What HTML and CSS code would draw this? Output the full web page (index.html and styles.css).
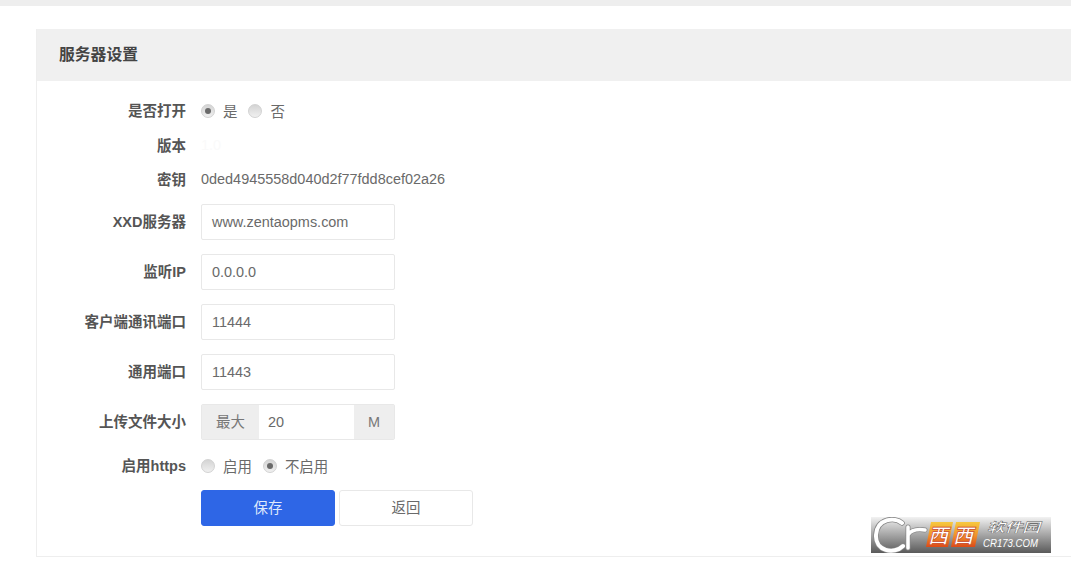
FILE: index.html
```html
<!DOCTYPE html>
<html lang="zh">
<head>
<meta charset="utf-8">
<title>服务器设置</title>
<link rel="stylesheet" href="styles.css">
</head>
<body>
<div class="topbar"></div>
<main class="panel">
  <h1 class="panel-title">服务器设置</h1>
  <form class="form">
    <div class="row">
      <span class="label">是否打开</span>
      <div class="options raised">
        <span class="radio checked"></span><span class="opt">是</span>
        <span class="radio"></span><span class="opt">否</span>
      </div>
    </div>
    <div class="row">
      <span class="label label-plain">版本</span>
      <span class="value ghost">1.0</span>
    </div>
    <div class="row">
      <span class="label label-plain">密钥</span>
      <span class="value">0ded4945558d040d2f77fdd8cef02a26</span>
    </div>
    <div class="row field first">
      <span class="label">XXD服务器</span>
      <div class="input">www.zentaopms.com</div>
    </div>
    <div class="row field">
      <span class="label">监听IP</span>
      <div class="input">0.0.0.0</div>
    </div>
    <div class="row field">
      <span class="label">客户端通讯端口</span>
      <div class="input">11444</div>
    </div>
    <div class="row field">
      <span class="label">通用端口</span>
      <div class="input">11443</div>
    </div>
    <div class="row field">
      <span class="label">上传文件大小</span>
      <div class="group">
        <span class="addon addon-left">最大</span>
        <span class="group-input">20</span>
        <span class="addon addon-right">M</span>
      </div>
    </div>
    <div class="row https">
      <span class="label">启用https</span>
      <div class="options raised">
        <span class="radio"></span><span class="opt">启用</span>
        <span class="radio checked"></span><span class="opt">不启用</span>
      </div>
    </div>
    <div class="row actions">
      <span class="label"></span>
      <div class="buttons">
        <span class="btn primary">保存</span>
        <span class="btn">返回</span>
      </div>
    </div>
  </form>
</main>
<svg class="watermark" width="180" height="36" viewBox="0 0 180 36" aria-label="西西软件园">
  <defs>
    <linearGradient id="bg" x1="0" y1="0" x2="0" y2="1">
      <stop offset="0" stop-color="#f2f2f2"/>
      <stop offset="0.4" stop-color="#b4b4b4"/>
      <stop offset="1" stop-color="#5a5a5a"/>
    </linearGradient>
    <linearGradient id="orange" x1="0" y1="0" x2="0" y2="1">
      <stop offset="0" stop-color="#f7c93f"/>
      <stop offset="0.55" stop-color="#f0902a"/>
      <stop offset="1" stop-color="#dc4a18"/>
    </linearGradient>
  </defs>
  <rect width="180" height="36" fill="url(#bg)"/>
  <path class="wm-edge" d="M31 6C24 0 6 1 5 18c-1 16 18 20 27 11"/>
  <path class="wm-c" d="M31 6C24 0 6 1 5 18c-1 16 18 20 27 11"/>
  <path class="wm-edge thin" d="M37 10v21M37 18c3-5 10-6 17-5"/>
  <path class="wm-c thin" d="M37 10v21M37 18c3-5 10-6 17-5"/>
  <path d="M60 5h22l-5 25H55z" fill="url(#orange)"/>
  <path d="M85 5h24l-5 25H80z" fill="url(#orange)"/>
  <text class="wm-xi" x="57" y="26">西</text>
  <text class="wm-xi" x="82" y="26">西</text>
  <text class="wm-cn" x="116" y="15" textLength="53" lengthAdjust="spacingAndGlyphs">软件园</text>
  <text class="wm-en" x="112" y="30" textLength="55" lengthAdjust="spacingAndGlyphs">CR173.COM</text>
</svg>
</body>
</html>
```
FILE: styles.css
```css
html, body {
  margin: 0;
  padding: 0;
  height: 563px;
  overflow: hidden;
  background: #fff;
  font-family: "Liberation Sans", "Noto Sans CJK SC", sans-serif;
  font-size: 14.45px;
  color: #666;
}
body {
  position: relative;
}
.topbar {
  height: 6px;
  background: #eeeeee;
}
.panel {
  margin: 23px 0 0 36px;
  height: 528px;
  box-sizing: border-box;
  border-left: 1px solid #eee;
  border-bottom: 1px solid #eee;
}
.panel-title {
  margin: 0;
  height: 52px;
  padding-left: 22px;
  background: #f0f0f0;
  font-size: 15.8px;
  line-height: 52px;
  font-weight: 700;
  color: #444;
}
.form {
  display: flex;
  flex-direction: column;
  padding-top: 13px;
}
.row {
  display: flex;
  align-items: center;
  height: 34px;
}
.label {
  width: 149px;
  flex: none;
  text-align: right;
  font-size: 14.5px;
  font-weight: 700;
  color: #555;
  margin-right: 15px;
  position: relative;
  top: -2px;
}
.label-plain {
  top: -1px;
}
.value {
  color: #6a6a6a;
}
.ghost {
  color: #fafafa;
}
.options {
  display: flex;
  align-items: center;
}
.radio {
  box-sizing: border-box;
  width: 14px;
  height: 14px;
  border-radius: 50%;
  border: 1px solid #d2d2d2;
  background: linear-gradient(#d4d4d4, #f0f0f0);
  display: flex;
  align-items: center;
  justify-content: center;
}
.radio.checked::after {
  content: "";
  width: 6px;
  height: 6px;
  border-radius: 50%;
  background: #6a6a6a;
}
.opt {
  margin: 0 11px 2px 8px;
  color: #6a6a6a;
}
.field {
  height: 36px;
  margin-bottom: 14px;
}
.field.first {
  margin-top: 8px;
}
.input {
  box-sizing: border-box;
  width: 194px;
  height: 36px;
  border: 1px solid #e8e8e8;
  border-radius: 2px;
  padding-left: 10px;
  line-height: 34px;
  color: #6a6a6a;
}
.group {
  display: flex;
  width: 194px;
  height: 36px;
  box-sizing: border-box;
  border: 1px solid #e8e8e8;
  border-radius: 2px;
  line-height: 34px;
}
.addon {
  background: #eeeeee;
  text-align: center;
  color: #777;
}
.addon-left {
  width: 57px;
}
.addon-right {
  width: 40px;
}
.group-input {
  flex: 1;
  padding-left: 9px;
  color: #6a6a6a;
}
.https {
  margin-top: -5px;
  height: 34px;
}
.actions {
  margin-top: 7px;
  height: 36px;
}
.buttons {
  display: flex;
  gap: 4px;
}
.btn {
  box-sizing: border-box;
  width: 134px;
  height: 36px;
  line-height: 34px;
  text-align: center;
  border: 1px solid #e8e8e8;
  border-radius: 3px;
  color: #6a6a6a;
  background: #fff;
}
.btn.primary {
  background: #2e66e6;
  border-color: #2e66e6;
  color: #dfe8fb;
}
.watermark {
  position: absolute;
  left: 871px;
  top: 517px;
}
.wm-edge,
.wm-c {
  fill: none;
  stroke-linecap: round;
}
.wm-edge {
  stroke: #888;
  stroke-width: 5.5px;
}
.wm-c {
  stroke: #fff;
  stroke-width: 4px;
}
.wm-edge.thin {
  stroke-width: 5px;
}
.wm-c.thin {
  stroke-width: 3.5px;
}
.wm-xi {
  font-family: "Noto Sans CJK SC", sans-serif;
  font-size: 20px;
  font-weight: 700;
  font-style: italic;
  fill: #fff;
  stroke: #c8401a;
  stroke-width: 0.6px;
}
.wm-cn {
  font-family: "Noto Sans CJK SC", sans-serif;
  font-size: 13px;
  font-style: italic;
  font-weight: 700;
  fill: #fff;
  stroke: #555;
  stroke-width: 0.4px;
}
.wm-en {
  font-family: "Liberation Sans", sans-serif;
  font-size: 11px;
  font-style: italic;
  fill: #fff;
}
```
